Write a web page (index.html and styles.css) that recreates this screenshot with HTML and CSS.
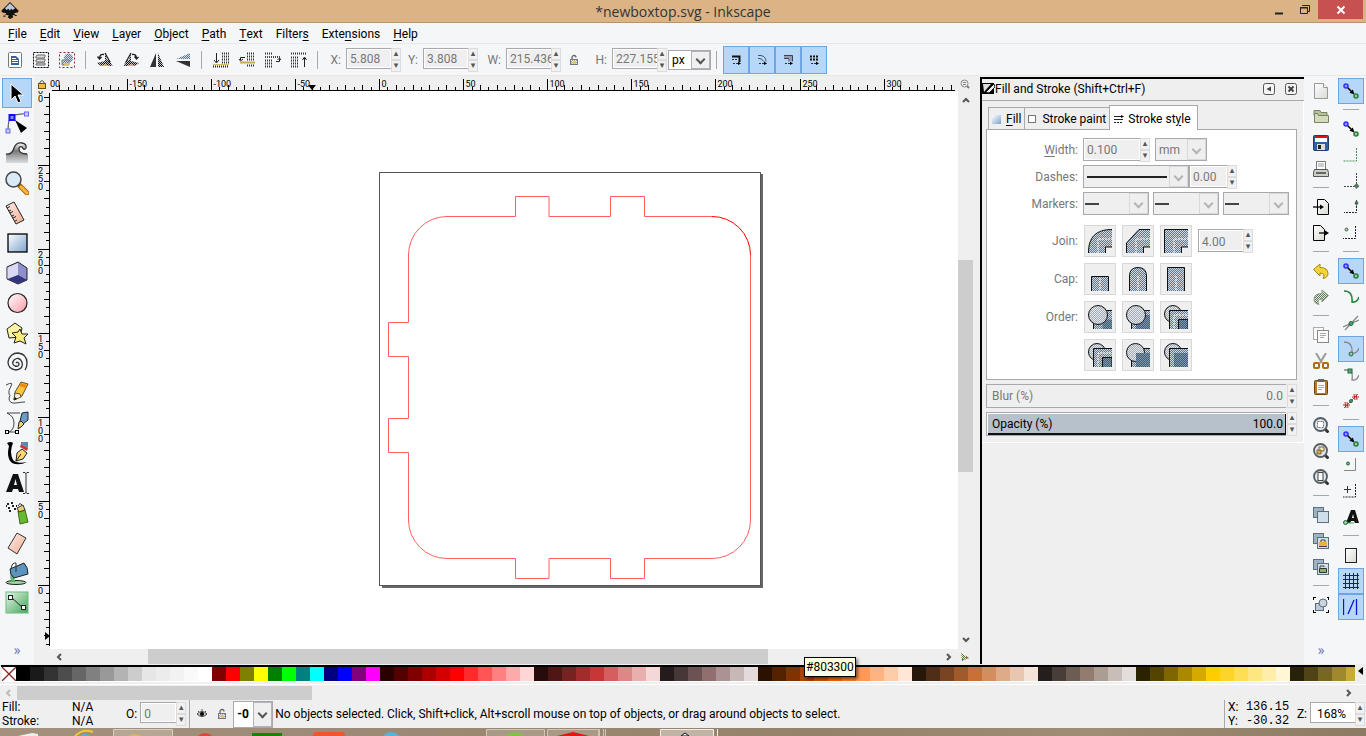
FILE: index.html
```html
<!DOCTYPE html>
<html lang="en">
<head>
    <meta charset="UTF-8">
    <meta name="viewport" content="width=device-width, initial-scale=1.0">
    <title>*newboxtop.svg - Inkscape</title>
    <link rel="stylesheet" href="styles.css">
</head>
<body>
    <!-- Shared patterns and symbols -->
    <svg class="defs" width="0" height="0" aria-hidden="true">
        <defs>
            <pattern id="chk" width="2" height="2" patternUnits="userSpaceOnUse"><rect width="2" height="2" fill="#d0d8e2"/><path d="M0 0h1v1H0zM1 1h1v1H1z" fill="#60788f"/></pattern>
            <pattern id="chk-dark" width="2" height="2" patternUnits="userSpaceOnUse"><rect width="2" height="2" fill="#8296ae"/><path d="M0 0h1v1H0zM1 1h1v1H1z" fill="#3c5a82"/></pattern>
            <pattern id="chk-light" width="2" height="2" patternUnits="userSpaceOnUse"><rect width="2" height="2" fill="#e6e8ea"/><path d="M0 0h1v1H0zM1 1h1v1H1z" fill="#a2acb8"/></pattern>
            <pattern id="chk-green" width="2" height="2" patternUnits="userSpaceOnUse"><rect width="2" height="2" fill="#eef2ec"/><path d="M0 0h1v1H0zM1 1h1v1H1z" fill="#3f7a24"/></pattern>
            <pattern id="chk-redo" width="2" height="2" patternUnits="userSpaceOnUse"><rect width="2" height="2" fill="#e4e8e2"/><path d="M0 0h1v1H0zM1 1h1v1H1z" fill="#5f7858"/></pattern>
            <pattern id="chk-black" width="2" height="2" patternUnits="userSpaceOnUse"><rect width="2" height="2" fill="#c4c4c4"/><path d="M0 0h1v1H0zM1 1h1v1H1z" fill="#111"/></pattern>
            <linearGradient id="blue" x2="1" y2="1"><stop stop-color="#fff"/><stop offset="1" stop-color="#7ba3cc"/></linearGradient>
            <linearGradient id="pink" x2="1" y2="1"><stop stop-color="#fff"/><stop offset="1" stop-color="#f99aa6"/></linearGradient>
            <linearGradient id="peach" x2="1" y2="1"><stop stop-color="#fdeee8"/><stop offset="1" stop-color="#efac92"/></linearGradient>
            <linearGradient id="green" x1="0" x2="1" y2="1"><stop stop-color="#e9f6ea"/><stop offset="1" stop-color="#3fa556"/></linearGradient>
            <linearGradient id="wave" x2="0" y2="1"><stop stop-color="#fff"/><stop offset=".4" stop-color="#777"/><stop offset="1" stop-color="#ddd"/></linearGradient>
            <linearGradient id="paper" x2="1" y2="1"><stop stop-color="#fff"/><stop offset="1" stop-color="#d8d8d4"/></linearGradient>
        </defs>
        <symbol id="snap" viewBox="0 0 16 16">
            <path d="M4 4l5 5" stroke="#000" stroke-width="1.5"/><path d="M11.500 11.500L6.500 9.800l3.300-3.300z"/>
            <circle cx="3" cy="3" r="2" fill="#99f" stroke="#33f" stroke-width="1.600"/><circle cx="13" cy="13" r="2" fill="#9c9" stroke="#2a8040" stroke-width="1.600"/>
        </symbol>
        <symbol id="lens" viewBox="0 0 16 16">
            <path d="M11 11l4.500 4.500" stroke="#333" stroke-width="3"/><circle cx="7.500" cy="7.500" r="6.500" fill="#dfe6ea" stroke="#555d62" stroke-width="1.800"/>
        </symbol>
        <symbol id="dup" viewBox="0 0 16 16">
            <rect x=".5" y=".5" width="10" height="10" fill="#9fb2c1" stroke="#5d6f7d"/><rect x="4.500" y="4.500" width="11" height="11" fill="#cfdeea" stroke="#5d6f7d"/>
        </symbol>
        <symbol id="padlock" viewBox="0 0 12 12">
            <path d="M4 6V3.500a2 2 0 0 1 4 0" fill="none" stroke="#666" stroke-width="1.300"/><rect x="2.500" y="5.500" width="7" height="5" fill="url(#chk-light)" stroke="#777"/><path d="M5 7h3v3H5z" fill="#e3cc55"/>
        </symbol>
        <symbol id="chev-l" viewBox="0 0 8 8"><path d="M6 1L3 4l3 3" fill="none" stroke="currentColor" stroke-width="2"/></symbol>
        <symbol id="chev-r" viewBox="0 0 8 8"><path d="M2 1l3 3-3 3" fill="none" stroke="currentColor" stroke-width="2"/></symbol>
        <symbol id="chev-u" viewBox="0 0 8 8"><path d="M1 6l3-3 3 3" fill="none" stroke="currentColor" stroke-width="2"/></symbol>
        <symbol id="chev-d" viewBox="0 0 8 8"><path d="M1 2l3 3 3-3" fill="none" stroke="currentColor" stroke-width="2"/></symbol>
        <symbol id="ink" viewBox="0 0 16 16">
            <path d="M8 0l7.500 7.500q.5 1.500-2 2l-2 .5 1.500 1-3 1 1 1.500L8 15l-2-1.500L7 12 3.500 11 5 10 2.500 9.500q-2.500-.5-2-2z" fill="#111"/><path d="M8 1l4.500 4.500-2 1.500L9 6 8 7.500 6.500 6 5 7 3.500 5.500z" fill="#b9c7dd"/><path d="M2 12.500h2M12 12h2" stroke="#222"/>
        </symbol>
    </svg>

    <div class="app">
        <header class="titlebar">
            <svg class="app-icon" width="18" height="18"><use href="#ink"/></svg>
            <h1>*newboxtop.svg - Inkscape</h1>
            <div class="window-buttons">
                <button aria-label="Minimize"><svg width="12" height="12"><path d="M2 9.500h8" stroke="#222" stroke-width="2"/></svg></button>
                <button aria-label="Restore"><svg width="12" height="12"><path d="M1.500 3.500h7v6h-7zM1 4h8M3.500 2V1.500h7v6H9" fill="none" stroke="#222"/></svg></button>
                <button class="close" aria-label="Close"><svg width="12" height="12"><path d="M2.500 2.500l7 7M9.500 2.500l-7 7" stroke="#fff" stroke-width="2"/></svg></button>
            </div>
        </header>

        <nav class="menubar">
            <button><u>F</u>ile</button>
            <button><u>E</u>dit</button>
            <button><u>V</u>iew</button>
            <button><u>L</u>ayer</button>
            <button><u>O</u>bject</button>
            <button><u>P</u>ath</button>
            <button><u>T</u>ext</button>
            <button>Filter<u>s</u></button>
            <button>Exte<u>n</u>sions</button>
            <button><u>H</u>elp</button>
        </nav>

        <!-- Selector tool controls -->
        <div class="toolbar">
            <button class="tb" aria-label="Select all"><svg width="16" height="16"><rect x="1.500" y=".5" width="13" height="15" rx="1" fill="#fdfdfd" stroke="#777"/><path d="M4 4h5l3 3v6H4z" fill="#2a66ad"/><path d="M5 6.500h4M5 8.500h6M5 10.500h6" stroke="#fff"/></svg></button>
            <button class="tb" aria-label="Select all in layers"><svg width="16" height="16"><rect x=".5" y=".5" width="15" height="15" fill="none" stroke="#000" stroke-dasharray="2 1"/><path d="M3 4l2-1h7v2l-1 1H3zM3 8l2-1h7v2l-1 1H3zM3 12l2-1h7v2H3z" fill="#ddd" stroke="#666"/></svg></button>
            <button class="tb" aria-label="Deselect"><svg width="16" height="16"><rect x=".5" y=".5" width="15" height="15" fill="none" stroke="#922" stroke-dasharray="2 2"/><circle cx="9.500" cy="6" r="4.500" fill="url(#chk)"/><path d="M3 8h7v5H3z" fill="url(#chk)" stroke="#888"/><path d="M5 11h5v2H5z" fill="#e0c060"/></svg></button>
            <span class="vsep"></span>
            <button class="tb" aria-label="Rotate left"><svg width="16" height="16"><path d="M8 1v10l7 2-2-4-3-1z" fill="url(#chk-black)"/><path d="M0 11l8-2 8 5H4z" fill="url(#chk-black)"/><path d="M4 14l4-2 5 2z" fill="#dcb860"/><path d="M7 2.500Q3 1.500 2.500 6M.5 4.500l2 2.500 2-2M8 1l5 9" fill="none" stroke="#222" stroke-width="1.300"/></svg></button>
            <button class="tb" aria-label="Rotate right"><svg width="16" height="16"><path d="M8 1v10l-7 2 2-4 3-1z" fill="url(#chk-black)"/><path d="M16 11L8 9l-8 5h12z" fill="url(#chk-black)"/><path d="M4 14l4-2 5 2z" fill="#dcb860"/><path d="M9 2.500Q13 1.500 13.500 6M11.500 4.500l2 2.500 2-2M8 1l-5 9" fill="none" stroke="#222" stroke-width="1.300"/></svg></button>
            <button class="tb" aria-label="Flip horizontal"><svg width="16" height="16"><path d="M7 1v14H1z" fill="#333"/><path d="M9 1v14h6z" fill="url(#chk-black)"/></svg></button>
            <button class="tb" aria-label="Flip vertical"><svg width="16" height="16"><path d="M15 1v6H1z" fill="url(#chk)"/><path d="M15 15V9H1z" fill="#333"/></svg></button>
            <span class="vsep"></span>
            <button class="tb" aria-label="Lower to bottom"><svg width="16" height="16"><path d="M3.500 1v9M1 8l2.500 3L6 8" fill="none" stroke="#222"/><path d="M9 1.500h7M9 4.500h7M9 7.500h7M9 10.500h7" stroke="#333" stroke-width="2" stroke-dasharray="1 1"/><path d="M0 12.500h16" stroke="#d9b860"/><path d="M0 14.500h16" stroke="#222" stroke-width="2" stroke-dasharray="1 1"/></svg></button>
            <button class="tb" aria-label="Lower"><svg width="16" height="16"><path d="M6 5.500H1.500V8M0 7l1.500 2L4 7" fill="none" stroke="#222"/><path d="M8 1.500h8M8 4.500h8M8 7.500h8M8 13.500h8" stroke="#333" stroke-width="2" stroke-dasharray="1 1"/><path d="M1 10.500h15" stroke="#c9a850" stroke-width="2"/></svg></button>
            <button class="tb" aria-label="Raise"><svg width="16" height="16"><path d="M11 9.500h3.500V7M12.500 8l2-2 1.500 2" fill="none" stroke="#222"/><path d="M0 1.500h8M0 8.500h8M0 11.500h8M0 14.500h8" stroke="#333" stroke-width="2" stroke-dasharray="1 1"/><path d="M0 5h15" stroke="#444" stroke-width="2" stroke-dasharray="1 1"/></svg></button>
            <button class="tb" aria-label="Raise to top"><svg width="16" height="16"><path d="M13.500 15V6M11.500 8l2-3 2 3" fill="none" stroke="#222"/><path d="M0 1.500h16M0 5.500h8M0 8.500h8M0 11.500h8M0 14.500h8" stroke="#333" stroke-width="2" stroke-dasharray="1 1"/></svg></button>
            <span class="vsep"></span>

            <label for="pos-x" class="dim">X:</label>
            <span class="spin"><input id="pos-x" type="text" value="5.808" disabled><span class="arrows"></span></span>
            <label for="pos-y" class="dim">Y:</label>
            <span class="spin"><input id="pos-y" type="text" value="3.808" disabled><span class="arrows"></span></span>
            <label for="width" class="dim wider">W:</label>
            <span class="spin"><input id="width" type="text" value="215.436" disabled><span class="arrows"></span></span>
            <button class="tb" aria-label="Lock ratio"><svg width="12" height="12"><use href="#padlock"/></svg></button>
            <label for="height" class="dim wide">H:</label>
            <span class="spin"><input id="height" type="text" value="227.155" disabled><span class="arrows"></span></span>
            <span class="combo unit"><select aria-label="Unit"><option>px</option><option>mm</option></select></span>
            <span class="vsep"></span>
            <div class="toggles">
                <button aria-label="Scale stroke"><svg width="12" height="12"><path d="M2 2.500h7.500V8" fill="none" stroke="#111" stroke-width="2"/><path d="M2 5.500h5M3 9.500h5" stroke="#333" stroke-dasharray="2 1"/><path d="M8 7.500l3 2L8 11z"/></svg></button>
                <button aria-label="Scale corners"><svg width="12" height="12"><path d="M2 1.500h3q5 1 5 6M2 4.500h2q3 1 3.500 3" fill="none" stroke="#456"/><path d="M3 9.500h5" stroke="#333" stroke-dasharray="2 1"/><path d="M8 7.500l3 2L8 11z"/></svg></button>
                <button aria-label="Move gradients"><svg width="12" height="12"><path d="M2 1.500h8.500v6M2 4.500h5v3" fill="none" stroke="#345"/><path d="M2 3h7v4" fill="none" stroke="#99a" stroke-width="2"/><path d="M3 9.500h5" stroke="#333" stroke-dasharray="2 1"/><path d="M8 7.500l3 2L8 11z"/></svg></button>
                <button aria-label="Move patterns"><svg width="12" height="12"><path d="M2 2.500h9M2 5.500h9" stroke="#111" stroke-width="2" stroke-dasharray="2 1"/><path d="M3 9.500h5" stroke="#333" stroke-dasharray="2 1"/><path d="M8 7.500l3 2L8 11z"/></svg></button>
            </div>
        </div>

        <main class="workspace">
            <div class="toolbox">
                <button class="active" aria-label="Select"><svg width="24" height="24"><path d="M6 3v16l4-4 3 7 3-1.500-3-6.500h5.500z" stroke="#fff"/></svg></button>
                <button aria-label="Edit paths by nodes"><svg width="24" height="24"><path d="M3 19Q3 6 8 4.500T22 2.500" fill="none" stroke="#444"/><rect x="1" y="18" width="4" height="4" fill="#ccf" stroke="#66e"/><rect x="19.500" y="1" width="4" height="4" fill="#ccf" stroke="#66e"/><rect x="4.500" y="4" width="5" height="5" fill="#88f" stroke="#11e" stroke-width="2"/><path d="M10 9l12 8-6 5z"/></svg></button>
                <button aria-label="Tweak"><svg width="24" height="24"><path d="M1 13q6 1 8-6 2-6 8-5 4 1 4 5-2 3-4-1-3-1-3 2 0 5 9 5v9H1z" fill="url(#wave)"/><path d="M1 13q6 1 8-6 2-6 8-5 5 1 4 5-2 3-4-1-3-1-3 2 0 5 8 5" fill="none" stroke="#333" stroke-width="1.300"/></svg></button>
                <button aria-label="Zoom"><svg width="24" height="24"><path d="M15 15l7 7" stroke="#a86400" stroke-width="5" stroke-linecap="round"/><path d="M16 16l6 6" stroke="#ffb93c" stroke-width="3" stroke-linecap="round"/><circle cx="8.500" cy="8.500" r="7.500" fill="#d9ebf7" stroke="#444" stroke-width="1.500"/></svg></button>
                <button aria-label="Measure"><svg width="24" height="24"><path d="M1 5l8-4 10 18-8 4z" fill="url(#peach)" stroke="#222"/><path d="M2 7l3-1.500M4 10l2-1M5 12l3-1.500M7 15l2-1M8 17l3-1.500M10 20l2-1" stroke="#222"/></svg></button>
                <button aria-label="Rectangle"><svg width="24" height="24"><rect x="3" y="3" width="19" height="18" fill="url(#blue)" stroke="#000" stroke-width="1.300"/></svg></button>
                <button aria-label="3D box"><svg width="24" height="24"><path d="M2 6l11-5 9 6v12l-9 4-11-5z" fill="#8f8fcc" stroke="#222"/><path d="M2.500 6.500L13 2l0 12-10.500 4z" fill="#d9d9f6"/><path d="M13 14l9 5-9 3.500-10-4.500z" fill="#34347e"/></svg></button>
                <button aria-label="Ellipse"><svg width="24" height="24"><circle cx="12.500" cy="12" r="9.500" fill="url(#pink)" stroke="#222" stroke-width="1.200"/></svg></button>
                <button aria-label="Star"><svg width="24" height="24"><path d="M2 8l8-6 7 5-2 9-11 1z" fill="#fdf3a4" stroke="#222"/><path d="M15 8l2 5h6l-4 4 2 6-6-3-6 2 2-6-4-4 6-1z" fill="#fdec78" stroke="#222"/></svg></button>
                <button aria-label="Spiral"><svg width="24" height="24"><path d="M11 12q2-2 3 1 0 3-4 2-4-2-1-6 5-4 8 2 2 7-6 8-8-1-8-8Q5 2 13 2q9 1 9 10 0 4-2 7" fill="none" stroke="#333" stroke-width="1.300"/></svg></button>
                <button aria-label="Pencil"><svg width="24" height="24"><path d="M1 4q8-4 5 1t-2 8q2 1 0 4 0 6 7 5 6-1 9-1" fill="none" stroke="#444"/><path d="M9 19l1-8 6-10 7 2-6 12z" fill="#fbc43a" stroke="#553"/><path d="M9 19l1-7 5 1 1 3z" fill="#fff4d8" stroke="#553"/><path d="M9 19l1-3 2 2z"/><path d="M16 2l6 2-1 3-7-2z" fill="#ee8a10"/></svg></button>
                <button aria-label="Bezier"><svg width="24" height="24"><path d="M2 2h13M2 2q7 3 7 10 0 7-5 9h8" fill="none" stroke="#444"/><path d="M17 2l6-1v8l-5 4-3-3z" fill="#6b9bc6" stroke="#223"/><path d="M13 18l1-7 2-1 3 3-3 3z" fill="#f0d070" stroke="#222"/><rect x=".5" y="19.500" width="3" height="3" fill="#fff" stroke="#000"/><rect x="10.500" y="19.500" width="3" height="3" fill="#fff" stroke="#000"/></svg></button>
                <button aria-label="Calligraphy"><svg width="24" height="24"><path d="M2 2q4-2 6 0-4 9 0 17 4 4 14 2-8 4-15 1Q1 17 4 5z"/><path d="M11 20l1-8 5-4 5 4-4 6z" fill="#fbd873" stroke="#222"/><path d="M11 20l5-7" stroke="#222"/><path d="M15 6l7 4 1-3-7-4z" fill="#c33"/><path d="M16 1h7v6l-7-4z" fill="#5c89b4"/></svg></button>
                <button aria-label="Text"><svg width="24" height="24"><path d="M1 21L8 3h5l6 18h-5l-1-3H8l-1 3zM9 14h3l-1.500-6z" fill="#111" fill-rule="evenodd"/><path d="M18 1.500h2l1 1 1-1h2M21 2v20M18 22.500h2l1-1 1 1h2" fill="none" stroke="#333"/></svg></button>
                <button aria-label="Spray"><svg width="24" height="24"><path d="M13 10l7-1 3 12-8 2z" fill="#69b832" stroke="#3a6a18"/><path d="M12 7l6-3 2 5-6 2z" fill="#e9ce6a" stroke="#333"/><path d="M13 5q2-4 4-1" fill="none" stroke="#333"/><path d="M2 3h2M6 2h2M3 7h2M7 5h2M9 8h2M4 10h2M1 5h1M11 5h1" stroke="#222" stroke-width="2"/></svg></button>
                <button aria-label="Eraser"><svg width="24" height="24"><path d="M3 17L12 2l9 5-9 16z" fill="url(#peach)" stroke="#333"/></svg></button>
                <button aria-label="Paint bucket"><svg width="24" height="24"><ellipse cx="11" cy="21.500" rx="10" ry="2" fill="#9ad8a0" stroke="#222"/><path d="M6 10q-2 7 1 11h4q-3-4-1-8z" fill="#5cb56c"/><path d="M5 8l14-6q4 4 4 11L9 17q-4-3-4-9z" fill="#5c93bf" stroke="#222"/><path d="M6 8q1-7 5-6v9" fill="none" stroke="#333"/></svg></button>
                <button aria-label="Gradient"><svg width="24" height="24"><rect x="1" y="1" width="22" height="21" fill="url(#green)" stroke="#6cba7c"/><path d="M6 6l12 11" stroke="#222"/><rect x="3.500" y="4.500" width="4" height="4" fill="#fff" stroke="#222"/><rect x="16.500" y="14.500" width="4" height="4" fill="#fff" stroke="#222"/></svg></button>
                <span class="more">»</span>
            </div>

            <section class="canvas-area">
                <div class="corner"><svg width="10" height="10"><path d="M3 5V3q2-3 4 0v2" fill="none" stroke="#555"/><rect x="1.500" y="4.500" width="7" height="5" fill="#f0bc3a" stroke="#6b5014"/></svg></div>
                <svg class="ruler" id="ruler-h"></svg>
                <div class="corner zoom-fit"><svg width="10" height="10"><path d="M6 6l3 3" stroke="#777" stroke-width="2"/><circle cx="4.500" cy="4.500" r="3.500" fill="#eee" stroke="#888"/><path d="M3 3.500h3M3 5.500h3" stroke="#888"/></svg></div>
                <svg class="ruler" id="ruler-v"></svg>
                <svg class="canvas">
                    <g transform="translate(329 81)">
                        <path d="M382 2h2v414H3v-2h379z" fill="#666"/>
                        <rect x=".5" y=".5" width="381" height="413" fill="#fff" stroke="#555"/>
                        <path class="cut" d="M333 44.500H265.500V24.500H231.500V44.500H170V24.500H136.500V44.500H68A38.500 38.500 0 0 0 29.500 83V150.500H9.500V184.500H29.500V246.500H9.500V280.500H29.500V348A38.500 38.500 0 0 0 68 386.500H136.500V406.500H170V386.500H231.500V406.500H265.500V386.500H333A38.500 38.500 0 0 0 371.500 348V83"/>
                        <path class="cut strong" d="M333 44.500A38.500 38.500 0 0 1 371.500 83"/>
                    </g>
                </svg>
                <div class="vscroll">
                    <svg width="8" height="8"><use href="#chev-u"/></svg>
                    <div class="track"><div class="thumb"></div></div>
                    <svg width="8" height="8"><use href="#chev-d"/></svg>
                </div>
                <div class="hscroll">
                    <svg width="8" height="8"><use href="#chev-l"/></svg>
                    <div class="track"><div class="thumb"></div></div>
                    <svg width="8" height="8"><use href="#chev-r"/></svg>
                </div>
                <div class="corner"><svg width="10" height="10"><path d="M1 1l8 5-7 3z" fill="url(#chk-green)"/><path d="M6 4l3 2-3 1z" fill="#b55"/><path d="M2 7h3L2 9z" fill="#66c"/></svg></div>
            </section>

            <aside class="dialog">
                <div class="dialog-head">
                    <svg width="13" height="13"><path d="M0 1h12v11H0z"/><path d="M1 2h8L2 10z" fill="#ddd"/><path d="M4 10l8-8 1 3-6 6z" fill="#eee" stroke="#222"/></svg>
                    <h2>Fill and Stroke (Shift+Ctrl+F)</h2>
                    <button aria-label="Iconify"><svg width="12" height="12"><rect x=".5" y=".5" width="11" height="11" rx="2" fill="#f4f4f4" stroke="#555"/><path d="M8 3.500v5L3.500 6z" fill="#444"/></svg></button>
                    <button aria-label="Close dialog"><svg width="12" height="12"><rect x=".5" y=".5" width="11" height="11" rx="2" fill="#f4f4f4" stroke="#555"/><path d="M3.500 3.500l5 5M8.500 3.500l-5 5" stroke="#444" stroke-width="2"/></svg></button>
                </div>
                <div class="dialog-body">
                    <div class="tabs">
                        <button><svg width="10" height="10"><rect width="9" height="9" y="1" fill="url(#blue)"/></svg><span><u>F</u>ill</span></button>
                        <button><svg width="10" height="10"><rect x=".5" y="1.500" width="7" height="7" fill="#fff" stroke="#777"/></svg><span>Stroke paint</span></button>
                        <button class="current"><svg width="10" height="10"><path d="M0 2.500h8M0 5.500h9" stroke="#222"/><path d="M0 8.500h9" stroke="#222" stroke-dasharray="2 1"/><path d="M7 1l3 1.500L7 4z"/></svg><span>Stroke st<u>y</u>le</span></button>
                    </div>
                    <div class="panel">
                        <div class="row">
                            <label for="sw"><u>W</u>idth:</label>
                            <span class="spin tall stroke-width"><input id="sw" type="text" value="0.100" disabled><span class="arrows"></span></span>
                            <span class="combo mm"><select aria-label="Width unit" disabled><option>mm</option></select></span>
                        </div>
                        <div class="row">
                            <label for="dashes">Dashes:</label>
                            <span class="combo dash"><select id="dashes" disabled><option label=" "></option></select></span>
                            <span class="spin tall short"><input type="text" aria-label="Dash offset" value="0.00" disabled><span class="arrows"></span></span>
                        </div>
                        <div class="row markers">
                            <label for="m-start">Markers:</label>
                            <span class="combo marker"><select id="m-start" disabled><option label=" "></option></select></span>
                            <span class="combo marker"><select aria-label="Mid marker" disabled><option label=" "></option></select></span>
                            <span class="combo marker"><select aria-label="End marker" disabled><option label=" "></option></select></span>
                        </div>
                        <div class="row big">
                            <span class="label">Join:</span>
                            <button disabled aria-label="Round join"><svg width="24" height="24"><path d="M0 24C0 8 8 .5 24 .5V18H18V24z" fill="url(#chk)"/><path d="M.5 24C.5 8 8 .5 24 .5M24 18H17.500V24" fill="none" stroke="#111"/><path d="M10 24V10H24" fill="none" stroke="#fff" stroke-dasharray="2 1"/></svg></button>
                            <button disabled aria-label="Bevel join"><svg width="24" height="24"><path d="M.5 24V14L13 .5H24V18H18V24z" fill="url(#chk)"/><path d="M.5 24V14L13 .5H24M24 18H17.500V24" fill="none" stroke="#111"/><path d="M10 24V10H24" fill="none" stroke="#fff" stroke-dasharray="2 1"/></svg></button>
                            <button disabled aria-label="Miter join"><svg width="24" height="24"><path d="M.5 24V.5H24V18H18V24z" fill="url(#chk)"/><path d="M.5 24V.5H24M24 18H17.500V24" fill="none" stroke="#111"/><path d="M10 24V10H24" fill="none" stroke="#fff" stroke-dasharray="2 1"/></svg></button>
                            <span class="spin tall"><input type="text" aria-label="Miter limit" value="4.00" disabled><span class="arrows"></span></span>
                        </div>
                        <div class="row big">
                            <span class="label">Cap:</span>
                            <button disabled aria-label="Butt cap"><svg width="24" height="24"><path d="M3.500 24V9.500h17V24" fill="url(#chk)" stroke="#111"/><path d="M12 11v13" stroke="#fff" stroke-dasharray="2 1"/></svg></button>
                            <button disabled aria-label="Round cap"><svg width="24" height="24"><path d="M3.500 24V9q0-8.500 8.500-8.500T20.500 9V24" fill="url(#chk)" stroke="#111"/><path d="M12 9v15" stroke="#fff" stroke-dasharray="2 1"/></svg></button>
                            <button disabled aria-label="Square cap"><svg width="24" height="24"><path d="M3.500 24V.5h17V24" fill="url(#chk)" stroke="#111"/><path d="M12 9v15" stroke="#fff" stroke-dasharray="2 1"/></svg></button>
                        </div>
                        <div class="row big">
                            <span class="label">Order:</span>
                            <button disabled aria-label="Fill, stroke, markers"><svg width="24" height="24"><path d="M5.500 24V5.500H24V24z" fill="url(#chk)"/><path d="M5.500 24V5.500H24" fill="none" stroke="#111"/><path d="M14.500 14.500H24V24h-9.500z" fill="url(#chk-dark)"/><circle cx="10" cy="10" r="9.500" fill="url(#chk-light)" stroke="#111"/></svg></button>
                            <button disabled aria-label="Stroke, fill, markers"><svg width="24" height="24"><path d="M5.500 24V5.500H24V24z" fill="url(#chk)"/><path d="M5.500 24V5.500H24" fill="none" stroke="#111"/><path d="M10 10H24V24H10z" fill="url(#chk-dark)"/><circle cx="10" cy="10" r="9.500" fill="url(#chk-light)" stroke="#111"/></svg></button>
                            <button disabled aria-label="Fill, markers, stroke"><svg width="24" height="24"><circle cx="9" cy="9" r="8.500" fill="url(#chk-light)" stroke="#111"/><path d="M5.500 24V5.500H24V24z" fill="url(#chk)"/><path d="M5.500 24V5.500H24" fill="none" stroke="#111"/><path d="M10 23V10H24" fill="none" stroke="#fff" stroke-dasharray="2 1"/><path d="M14.500 24V14.500H24V24" fill="url(#chk-dark)" stroke="#111"/></svg></button>
                        </div>
                        <div class="row big">
                            <span class="label"></span>
                            <button disabled aria-label="Markers, fill, stroke"><svg width="24" height="24"><circle cx="9" cy="9" r="8.500" fill="url(#chk-light)" stroke="#111"/><path d="M5.500 24V5.500H24V24z" fill="url(#chk)"/><path d="M5.500 24V5.500H24" fill="none" stroke="#111"/><path d="M10 23V10H24" fill="none" stroke="#fff" stroke-dasharray="2 1"/><path d="M14.500 24V14.500H24V24" fill="url(#chk-dark)" stroke="#111"/></svg></button>
                            <button disabled aria-label="Stroke, markers, fill"><svg width="24" height="24"><path d="M5.500 24V5.500H24V24z" fill="url(#chk)"/><path d="M5.500 24V5.500H24" fill="none" stroke="#111"/><circle cx="9.500" cy="9.500" r="9" fill="url(#chk-light)" stroke="#111"/><path d="M10 10H24V24H10z" fill="url(#chk-dark)"/></svg></button>
                            <button disabled aria-label="Markers, stroke, fill"><svg width="24" height="24"><circle cx="9" cy="9" r="8.500" fill="url(#chk-light)" stroke="#111"/><path d="M5.500 24V5.500H24V24z" fill="url(#chk)"/><path d="M5.500 24V5.500H24" fill="none" stroke="#111"/><path d="M10 10H24V24H10z" fill="url(#chk-dark)"/></svg></button>
                        </div>
                    </div>
                    <div class="meter">
                        <div class="bar"><label for="blur">Blur (%)</label><input id="blur" type="text" value="0.0" disabled></div>
                        <span class="arrows"></span>
                    </div>
                    <div class="meter on">
                        <div class="bar"><label for="opacity">Opacity (%)</label><input id="opacity" type="text" value="100.0"></div>
                        <span class="arrows"></span>
                    </div>
                </div>
            </aside>

            <div class="sidebar">
                <button aria-label="New"><svg width="16" height="16"><path d="M1.500.5h9l4 4v11h-13z" fill="url(#paper)" stroke="#999"/><path d="M10.500.5v4h4" fill="#fff" stroke="#999"/></svg></button>
                <button aria-label="Open"><svg width="16" height="16"><path d="M1 1.500h6l1 2h6v3H1z" fill="#b4c098" stroke="#79845f"/><path d="M1.500 4.500v9h14v-7h-10l-1-2z" fill="#d3dbbf" stroke="#79845f"/></svg></button>
                <button aria-label="Save"><svg width="16" height="16"><rect x=".5" y=".5" width="15" height="15" rx="1" fill="#2f62a4" stroke="#1b3d6d"/><path d="M2 1h12v6H2z" fill="#fff"/><path d="M2 1h12v2H2z" fill="#d11"/><path d="M4 9h8v6H4z" fill="#dcdcdc"/><path d="M5 10h3v4H5z" fill="#222"/></svg></button>
                <button aria-label="Print"><svg width="16" height="16"><path d="M3.500.5h9v8h-9z" fill="#fff" stroke="#777"/><path d="M5 3h6M5 5h6" stroke="#999"/><path d="M1.500 8.500h13l1 3v4H.5v-4z" fill="#ccd0c8" stroke="#555"/><path d="M3 12h10" stroke="#444" stroke-width="1.500"/></svg></button>
                <span class="hsep"></span>
                <button aria-label="Import"><svg width="16" height="16"><path d="M4.500.5h7l4 4v11h-11z" fill="url(#paper)" stroke="#000"/><path d="M0 8h8" stroke="#000" stroke-width="1.300"/><path d="M7 5.500L11 8l-4 2.500z"/></svg></button>
                <button aria-label="Export"><svg width="16" height="16"><path d="M.5.500h7l4 4v11H.5z" fill="url(#paper)" stroke="#000"/><path d="M6 8h7" stroke="#000" stroke-width="1.300"/><path d="M12 5.500L16 8l-4 2.500z"/></svg></button>
                <span class="hsep"></span>
                <button aria-label="Undo"><svg width="16" height="16"><path d="M.5 6.500L7 1v3.500q8 0 8 6 0 4-5 5 3-5-3-5.500V13z" fill="#f2d338" stroke="#a8860c"/></svg></button>
                <button aria-label="Redo"><svg width="16" height="16"><path d="M15.500 6.500L9 1v3.500q-8 0-8 6 0 4 5 5-3-5 3-5.500V13z" fill="url(#chk-redo)" stroke="#8a9a84"/></svg></button>
                <span class="hsep"></span>
                <button aria-label="Copy"><svg width="16" height="16"><rect x=".5" y=".5" width="10" height="12" fill="#fafafa" stroke="#aaa"/><rect x="4.500" y="3.500" width="11" height="12" fill="#fafafa" stroke="#888"/><path d="M7 6.500h6M7 8.500h6M7 10.500h4" stroke="#aaa"/></svg></button>
                <button aria-label="Cut"><svg width="16" height="16"><path d="M3 0l6 10M13 0L7 10" stroke="#999" stroke-width="2"/><rect x="1" y="10" width="5" height="5" rx="1" fill="none" stroke="#b36a10" stroke-width="2"/><rect x="10" y="10" width="5" height="5" rx="1" fill="none" stroke="#b36a10" stroke-width="2"/></svg></button>
                <button aria-label="Paste"><svg width="16" height="16"><rect x="1.500" y="1.500" width="13" height="14" rx="1" fill="#b5792a" stroke="#6d4510"/><path d="M4 3h8v11H4z" fill="#fff"/><path d="M5 0h6v3H5z" fill="#666"/><path d="M5 6.500h6M5 8.500h6M5 10.500h4" stroke="#aaa"/></svg></button>
                <span class="hsep"></span>
                <button aria-label="Zoom selection"><svg width="16" height="16"><use href="#lens"/><rect x="4.500" y="4.500" width="6" height="6" fill="#fff" stroke="#777" stroke-dasharray="2 1"/></svg></button>
                <button aria-label="Zoom drawing"><svg width="16" height="16"><use href="#lens"/><path d="M6 4h5v4H6z" fill="#f5e7a8" stroke="#764"/><path d="M4 7h4v4H4z" fill="#e0a530" stroke="#764"/></svg></button>
                <button aria-label="Zoom page"><svg width="16" height="16"><use href="#lens"/><rect x="5" y="3.500" width="5" height="8" fill="#fff" stroke="#444"/></svg></button>
                <span class="hsep"></span>
                <button aria-label="Duplicate"><svg width="16" height="16"><use href="#dup"/></svg></button>
                <button aria-label="Clone"><svg width="16" height="16"><use href="#dup"/><path d="M8 9V7h4v2" fill="none" stroke="#444"/><path d="M6 9h8v5H6z" fill="#e8b440"/><path d="M6 13.500h8" stroke="#444"/></svg></button>
                <button aria-label="Unlink clone"><svg width="16" height="16"><use href="#dup"/><path d="M7 9V7h4v1" fill="none" stroke="#444"/><path d="M6.500 9.500h7v4h-7z" fill="#8ab06a" stroke="#333"/></svg></button>
                <span class="hsep"></span>
                <button aria-label="Group"><svg width="16" height="16"><rect x="2.500" y="6.500" width="8" height="7" fill="#b9cbd8" stroke="#667"/><circle cx="10" cy="6" r="4" fill="#c7d7e2" stroke="#667"/><path d="M0 0h3v1H1v2H0zM16 0h-2v1h1v2h1zM0 16h3v-1H1v-2H0zM16 16h-3v-1h2v-2h1z"/></svg></button>
                <span class="more">»</span>
            </div>

            <div class="sidebar snapbar">
                <button class="active" aria-label="Enable snapping"><svg width="16" height="16"><use href="#snap"/></svg></button>
                <span class="hsep"></span>
                <button aria-label="Snap bounding boxes"><svg width="16" height="16"><use href="#snap"/></svg></button>
                <button aria-label="Snap to edges"><svg width="16" height="16"><path d="M13.500 1v13H0" fill="none" stroke="#4b8a58" stroke-dasharray="2 1"/></svg></button>
                <button aria-label="Snap to corners"><svg width="16" height="16"><path d="M13.500 0v13.500H0" fill="none" stroke="#444" stroke-dasharray="2 1"/><path d="M13.500 10l3 3-3 3-3-3z" fill="#5b7a62"/></svg></button>
                <button aria-label="Snap edge midpoints"><svg width="16" height="16"><path d="M13.500 1v12.500H1" fill="none" stroke="#222" stroke-dasharray="2 1"/><path d="M13.500 1l2 3-2 3-2-3z" fill="#476b50"/></svg></button>
                <button aria-label="Snap centers"><svg width="16" height="16"><path d="M12.500 1v12.500H0" fill="none" stroke="#222" stroke-dasharray="2 1"/><circle cx="3.500" cy="4.500" r="1.500" fill="#9c9" stroke="#476b50"/></svg></button>
                <span class="hsep"></span>
                <button class="active" aria-label="Snap nodes"><svg width="16" height="16"><use href="#snap"/></svg></button>
                <button aria-label="Snap to paths"><svg width="16" height="16"><path d="M1 2q9 0 8 11 5 1 7-5" fill="none" stroke="#27863a" stroke-width="1.600"/></svg></button>
                <button aria-label="Snap intersections"><svg width="16" height="16"><path d="M0 12L16 5M2 15L15 1" stroke="#888" stroke-width="1.300"/><circle cx="8" cy="8.500" r="2" fill="#4a5" stroke="#264"/></svg></button>
                <button class="active" aria-label="Snap cusp nodes"><svg width="16" height="16"><path d="M1 1q9 0 8 11 5 1 7-5" fill="none" stroke="#888" stroke-width="1.300"/><circle cx="8" cy="13" r="2" fill="#9c9" stroke="#264"/></svg></button>
                <button aria-label="Snap smooth nodes"><svg width="16" height="16"><path d="M1 3h6q3 2 2 10 5 1 7-5" fill="none" stroke="#888" stroke-width="1.300"/><rect x="5" y="2" width="4" height="4" fill="#5a6" stroke="#264"/></svg></button>
                <button aria-label="Snap midpoints"><svg width="16" height="16"><path d="M1 15L15 1" stroke="#777"/><path d="M2 9l1 6M4 9l1 6M0 12h7M11 1l1 6M13 1l1 6M9 4h7" stroke="#c22"/><circle cx="8" cy="8" r="1.500" fill="#4a5" stroke="#264"/></svg></button>
                <span class="hsep"></span>
                <button class="active" aria-label="Snap others"><svg width="16" height="16"><use href="#snap"/></svg></button>
                <button aria-label="Snap object centers"><svg width="16" height="16"><path d="M12.500 1v12.500H1" fill="none" stroke="#888"/><circle cx="5" cy="6.500" r="1.500" fill="#6b7" stroke="#264"/></svg></button>
                <button aria-label="Snap rotation centers"><svg width="16" height="16"><path d="M12.500 1v13H0" fill="none" stroke="#222" stroke-dasharray="2 1"/><path d="M1 6.500h7M4.500 3v7" stroke="#333"/></svg></button>
                <button aria-label="Snap text baselines"><svg width="16" height="16"><path d="M3 14L8 1h4l4 13h-4l-1-2H8l-1 2zM9 9h2l-1-4z" fill="#111" fill-rule="evenodd"/><path d="M2 14h9" stroke="#4a5"/><circle cx="2.500" cy="13.500" r="2" fill="#9c9" stroke="#264"/></svg></button>
                <span class="hsep"></span>
                <button aria-label="Snap page border"><svg width="16" height="16"><rect x="2.500" y="1.500" width="11" height="14" fill="url(#paper)" stroke="#222"/></svg></button>
                <button class="active" aria-label="Snap grids"><svg width="16" height="16"><path d="M2.500 0v16M6.500 0v16M10.500 0v16M14.500 0v16M0 2.500h16M0 6.500h16M0 10.500h16M0 14.500h16" stroke="#11d"/></svg></button>
                <button class="active" aria-label="Snap guides"><svg width="16" height="16"><path d="M.5 0v16M13.500 0v16M5 15L11 1" stroke="#11d" stroke-width="1.300"/></svg></button>
            </div>
        </main>

        <div class="palette">
            <div class="swatches" id="swatches"><svg width="14" height="14"><rect width="14" height="14" fill="#fff"/><path d="M0 0l14 14M14 0L0 14" stroke="#822" stroke-width="1.300"/></svg></div>
            <svg class="palette-menu" width="6" height="8"><path d="M5 0v8L0 4z"/></svg>
            <div class="tooltip" role="tooltip">#803300</div>
        </div>
        <div class="palette-scroll">
            <svg class="off" width="8" height="8"><use href="#chev-l"/></svg>
            <div class="track"><div class="thumb"></div></div>
            <svg width="8" height="8"><use href="#chev-r"/></svg>
        </div>

        <footer class="statusbar">
            <dl class="style-info">
                <dt>Fill:</dt><dd>N/A</dd>
                <dt>Stroke:</dt><dd>N/A</dd>
            </dl>
            <label for="obj-opacity">O:</label>
            <span class="spin small"><input id="obj-opacity" type="text" value="0" disabled><span class="arrows"></span></span>
            <span class="line"></span>
            <button aria-label="Layer visible"><svg width="12" height="12"><path d="M1 6q5-5 10 0-5 5-10 0z" fill="#ccc" stroke="#444"/><circle cx="6" cy="6" r="2"/><path d="M2 3l1 1M6 1v2M10 3L9 4" stroke="#555"/></svg></button>
            <button aria-label="Layer unlocked"><svg width="12" height="12"><use href="#padlock"/></svg></button>
            <span class="combo layer"><select aria-label="Current layer"><option>-0</option></select></span>
            <p>No objects selected. Click, Shift+click, Alt+scroll mouse on top of objects, or drag around objects to select.</p>
            <dl class="coords">
                <dt>X:</dt><dd>136.15</dd>
                <dt>Y:</dt><dd>-30.32</dd>
            </dl>
            <label for="zoom">Z:</label>
            <span class="spin zoom"><input id="zoom" type="text" value="168%"><span class="arrows"></span></span>
        </footer>

        <svg class="taskbar">
            <path d="M18 8l14-3 6 1v2z" fill="#eee"/>
            <path d="M75 8q8-8 18-4" fill="none" stroke="#f4c92a" stroke-width="2"/><path d="M80 8q5-4 10 0z" fill="#4ab4e6"/>
            <path d="M113.500 9V1.500h59V9" fill="#b5a793" stroke="#d8cfc2"/><path d="M128 8l6-2 8 2z" fill="#d8b95c"/>
            <circle cx="205" cy="15" r="10" fill="#d9493a"/>
            <path d="M252 5h30v3h-30z" fill="#0a8a0a"/>
            <path d="M313 8q0-4 4-4h24q4 0 4 4z" fill="#f1562a"/>
            <circle cx="391" cy="14" r="10" fill="#54b4dd"/>
            <path d="M486.500 9V1.500h58V9M547.500 9V1.500h51V9M599.500 1v8M603.500 1v8M605.500 1v8" fill="#a99a86" stroke="#d0c6b8"/>
            <circle cx="515" cy="16" r="12" fill="#82c04a"/><path d="M557 8l16-4 16 4z" fill="#e11"/>
            <path d="M660.500 9V1.500h53V9M717.500 1v8" fill="#bfb4a5" stroke="#f3eee6"/><path d="M681 8l4-3 4 3z" fill="#eee" stroke="#111"/>
        </svg>
    </div>

    <script src="script.js"></script>
</body>
</html>
```

FILE: styles.css
```css
* {
    box-sizing: border-box;
}

body {
    margin: 0;
    font-family: Roboto, 'Open Sans', sans-serif;
    font-size: 12px;
    line-height: 14px;
    color: #000;
}

button, input, select {
    font: inherit;
    color: inherit;
}

button {
    background: none;
    border: none;
    padding: 0;
    display: flex;
    align-items: center;
    justify-content: center;
}

h1, h2, p, dl, dd {
    margin: 0;
    font-weight: normal;
}

.defs {
    position: absolute;
}

.app {
    height: 100vh;
    display: flex;
    flex-direction: column;
    background: #efefef;
    overflow: hidden;
}

.app svg {
    flex: none;
}

/* Title bar */
.titlebar {
    height: 23px;
    flex: none;
    display: grid;
    grid-template-columns: 1fr auto 1fr;
    background: #dbb384;
    border-bottom: 1px solid #b8956c;
}

.titlebar h1 {
    font-family: 'Open Sans', sans-serif;
    font-size: 14px;
    line-height: 23px;
    color: #333;
}

.app-icon {
    margin: 2px 0 0 1px;
}

.window-buttons {
    display: flex;
    justify-content: flex-end;
    padding-right: 3px;
}

.window-buttons button {
    width: 26px;
    height: 19px;
}

.window-buttons .close {
    width: 45px;
    background: #c75050;
}

/* Menu and tool controls */
.menubar {
    height: 21px;
    flex: none;
    display: flex;
    gap: 13px;
    padding: 2px 0 0 8px;
    background: #f5f6f8;
    border-bottom: 1px solid #e6e8ea;
}

u {
    text-underline-offset: 2px;
}

.toolbar {
    height: 32px;
    flex: none;
    display: flex;
    align-items: center;
    padding-left: 2px;
    background: #f5f6f8;
    border-bottom: 1px solid #e6e8ea;
}

.tb {
    width: 26px;
    height: 26px;
}

.vsep {
    width: 12px;
    height: 18px;
    background: linear-gradient(#a8a8a8, #a8a8a8) 5px 0 / 1px 100% no-repeat;
}

.toolbar label {
    width: 22px;
    padding-right: 5px;
    text-align: right;
    white-space: nowrap;
}

.dim {
    color: #777;
}

.toolbar .wide {
    width: 25px;
}

.toolbar .wider {
    width: 28px;
}

.spin {
    display: flex;
}

.spin input {
    width: 45px;
    height: 21px;
    padding: 2px 0 0 3px;
    border: 1px solid #a7a9ae;
    border-right: none;
    border-radius: 0;
    background: #fff;
    min-width: 0;
}

.spin input:disabled {
    color: #777;
    background: #efefef;
    box-shadow: inset 0 0 0 1px #fff;
}

/* Up and down buttons of a number box */
.arrows {
    width: 10px;
    align-self: stretch;
    display: flex;
    flex-direction: column;
    justify-content: space-between;
}

.arrows::before, .arrows::after {
    content: '▴';
    height: 10px;
    border: 1px solid #dcdcdc;
    background: #f1f1f1;
    color: #555;
    font: 9px/8px 'DejaVu Sans', sans-serif;
    text-align: center;
}

.arrows::after {
    content: '▾';
}

/* Drop-downs */
.combo {
    position: relative;
    height: 20px;
    display: flex;
}

.combo select {
    appearance: none;
    width: 100%;
    height: 100%;
    padding: 0 3px;
    border: 1px solid #a7a9ae;
    border-radius: 0;
    background: #fff;
    opacity: 1;
}

.combo::before {
    content: '';
    position: absolute;
    right: 1px;
    top: 1px;
    bottom: 1px;
    width: 17px;
    background: #efefef;
    border: 1px solid #b4b4b8;
    pointer-events: none;
}

.combo::after {
    content: '';
    position: absolute;
    right: 7px;
    top: calc(50% - 4px);
    width: 5px;
    height: 5px;
    border: solid #555;
    border-width: 0 2px 2px 0;
    transform: rotate(45deg);
    pointer-events: none;
}

.combo:has(:disabled)::after {
    border-color: #b4b4b4;
}

.combo:has(:disabled)::before {
    border-color: #d8d8d8;
}

.combo select:disabled {
    background-color: #efefef;
    color: #777;
}

.unit {
    width: 43px;
    margin-left: 1px;
}

.toggles {
    display: flex;
}

.toggles button {
    width: 26px;
    height: 28px;
    background: #b7d7f8;
    border: 1px solid #6ca6e2;
}

/* Workspace */
.workspace {
    flex: 1;
    min-height: 0;
    display: flex;
}

.toolbox {
    width: 34px;
    flex: none;
    display: flex;
    flex-direction: column;
    padding: 2px 2px 7px;
    background: #f5f6f8;
    overflow: hidden;
}

.toolbox button {
    width: 30px;
    height: 30px;
    flex: none;
}

.active {
    background: #b7d7f8;
    border: 1px solid #6ca6e2;
}

.more {
    margin-top: auto;
    text-align: center;
    font-size: 15px;
    color: #7878b8;
}

.canvas-area {
    flex: 1;
    min-width: 0;
    display: grid;
    grid-template-columns: 16px 1fr 22px;
    grid-template-rows: 15px 1fr 15px;
}

.corner {
    display: flex;
    align-items: center;
    justify-content: center;
}

.zoom-fit, .hscroll + .corner {
    padding-right: 8px;
}

.ruler {
    width: 100%;
    height: 100%;
    font-size: 9px;
}

.canvas {
    width: 100%;
    height: 100%;
    background: #fff;
    overflow: hidden;
}

.cut {
    fill: none;
    stroke: #ff5f5f;
}

.strong {
    stroke: #f00;
}

.vscroll, .hscroll, .palette-scroll {
    display: flex;
    align-items: center;
    color: #555;
}

.vscroll {
    flex-direction: column;
    padding: 5px 7px 5px 0;
}

.hscroll {
    grid-column: 1 / 3;
    padding: 0 5px 0 21px;
}

.track {
    flex: 1;
    min-width: 0;
    display: flex;
}

.thumb {
    background: #cdcdcd;
}

.vscroll .track {
    flex-direction: column;
    width: 15px;
    padding-top: 156px;
}

.vscroll .thumb {
    height: 212px;
}

.hscroll .track {
    height: 15px;
    padding-left: 85px;
}

.hscroll .thumb {
    width: 620px;
}

/* Fill and Stroke dialog */
.dialog {
    width: 324px;
    flex: none;
    margin-top: 1px;
    border-top: 2px solid #000;
    border-left: 2px solid #000;
    background: #efefef;
    overflow: hidden;
}

.dialog-head {
    height: 22px;
    display: flex;
    align-items: center;
    padding: 0 7px 2px 0;
    border-bottom: 1px solid #aaa;
}

.dialog-head h2 {
    flex: 1;
    font-size: 12px;
}

.dialog-head button {
    margin-left: 10px;
}

.dialog-body {
    padding: 0 6px 6px 4px;
    border-right: 1px solid #fff;
    border-bottom: 1px solid #fff;
}

.tabs {
    display: flex;
    align-items: flex-end;
    height: 28px;
    padding-left: 2px;
}

.tabs button {
    height: 22px;
    gap: 4px;
    padding: 1px 3px 0;
    border: 1px solid #a7a9ae;
    border-bottom: none;
    border-right: none;
    white-space: nowrap;
}

.tabs .current {
    height: 25px;
    padding: 1px 6px 0 4px;
    margin-bottom: -1px;
    background: #fff;
    border-right: 1px solid #a7a9ae;
    z-index: 1;
}

.panel {
    height: 251px;
    margin-bottom: 4px;
    padding-top: 6px;
    background: #fff;
    border: 1px solid #a7a9ae;
}

.row {
    height: 27px;
    display: flex;
    align-items: center;
    color: #777;
}

.row label, .row .label {
    width: 91px;
    margin-right: 5px;
    text-align: right;
}

.tall input, .row .combo {
    height: 23px;
}

.stroke-width input {
    width: 57px;
}

.short input {
    width: 38px;
}

.mm {
    width: 52px;
    margin-left: 5px;
}

.dash {
    width: 106px;
}

.dash select:disabled {
    background: linear-gradient(#222, #222) 3px 10px / 80px 2px no-repeat #efefef;
}

.markers {
    gap: 4px;
}

.markers label {
    margin-right: 1px;
}

.marker {
    width: 66px;
}

.marker select:disabled {
    background: linear-gradient(#444, #444) 1px 10px / 14px 2px no-repeat #efefef;
}

.big {
    height: 38px;
    gap: 6px;
}

.markers + .big {
    margin-top: 5px;
}

.big .label {
    margin-right: 0;
}

.big button {
    width: 32px;
    height: 32px;
    background: #efefef;
    border: 1px solid #d8d8d8;
}

.meter {
    height: 24px;
    display: flex;
    gap: 1px;
}

.meter + .meter {
    margin-top: 4px;
}

.bar {
    flex: 1;
    min-width: 0;
    display: flex;
    align-items: center;
    justify-content: space-between;
    padding: 0 3px 0 5px;
    border: 1px solid #a7a9ae;
    border-right: none;
    color: #777;
}

.bar input {
    width: 50px;
    padding: 0;
    border: none;
    background: none;
    text-align: right;
}

.bar input:disabled {
    color: #777;
}

.on .bar {
    color: #000;
    background: #b6c1cb;
    box-shadow: inset 1px 1px #fff, inset -1px -2px #111;
}

/* Command and snap bars */
.sidebar {
    width: 32px;
    flex: none;
    display: flex;
    flex-direction: column;
    align-items: center;
    padding: 2px 0 7px 2px;
    background: #f5f6f8;
    overflow: hidden;
}

.snapbar {
    width: 30px;
    padding-left: 0;
}

.sidebar button {
    width: 26px;
    height: 26px;
    flex: none;
}

.hsep {
    width: 16px;
    height: 12px;
    flex: none;
    background: linear-gradient(#a8a8a8, #a8a8a8) 0 5px / 100% 1px no-repeat;
}

/* Palette */
.palette {
    position: relative;
    height: 20px;
    flex: none;
    display: flex;
    margin-top: 1px;
    padding-left: 1px;
    border-bottom: 1px solid #fff;
}

.swatches {
    flex: 1;
    min-width: 0;
    display: flex;
    height: 17px;
    padding-left: 1px;
    border-top: 2px solid #000;
    border-bottom: 1px solid #fff;
    overflow: hidden;
}

.swatches span {
    width: 14px;
    flex: none;
}

.palette-menu {
    margin: 2px 2px 0 3px;
}

.tooltip {
    position: absolute;
    left: 804px;
    top: -8px;
    padding: 2px 1px;
    border: 1px solid #000;
    background: #ffffe1;
    box-shadow: 2px 2px 3px rgba(0, 0, 0, 0.5);
    z-index: 1;
}

.palette-scroll {
    height: 15px;
    flex: none;
    padding: 0 13px 0 4px;
}

.palette-scroll .off {
    color: #bbb;
}

.palette-scroll .track {
    height: 14px;
    padding-left: 5px;
}

.palette-scroll .thumb {
    width: 295px;
}

/* Status bar */
.statusbar {
    height: 28px;
    flex: none;
    display: flex;
    align-items: center;
    padding-left: 2px;
}

.style-info, .coords {
    display: grid;
    grid-template-columns: 70px 54px;
    line-height: 14px;
}

.statusbar label {
    margin-right: 3px;
}

.small input {
    width: 36px;
}

.line {
    width: 1px;
    height: 28px;
    margin: 0 3px;
    background: #a8a8a8;
}

.statusbar button {
    width: 18px;
    margin-right: 2px;
}

.statusbar .layer {
    width: 40px;
    height: 27px;
    margin-right: 2px;
    font-weight: bold;
}

.statusbar p {
    flex: 1;
    min-width: 0;
    white-space: nowrap;
}

.coords {
    grid-template-columns: 18px 51px;
    padding-left: 3px;
    border-left: 1px solid #a8a8a8;
}

.coords dd {
    font-family: 'Liberation Mono', monospace;
    font-size: 12px;
}

.zoom {
    padding-right: 1px;
}

.zoom input {
    padding-left: 6px;
}

.taskbar {
    width: 100%;
    height: 8px;
    background: linear-gradient(90deg, #a3917c, #95826b 60%, #a08d76 80%, #8d7a62);
}
```

FILE: script.js
```js
const SVG_NS = 'http://www.w3.org/2000/svg';
const STEP = 8.41; // pixels for 5 units

const colors = (
    '000000 1a1a1a 333333 4d4d4d 666666 808080 999999 b3b3b3 cccccc e6e6e6 ececec f2f2f2 f9f9f9 ffffff ' +
    '800000 ff0000 808000 ffff00 008000 00ff00 008080 00ffff 000080 0000ff 800080 ff00ff ' +
    '2b0000 550000 800000 aa0000 d40000 ff0000 ff2a2a ff5555 ff8080 ffaaaa ffd5d5 ' +
    '280b0b 501616 782121 a02c2c c83737 d35f5f de8787 e9afaf f4d7d7 ' +
    '241c1c 483737 6c5353 916f6f ac9393 c8b7b7 e3dbdb ' +
    '2b1100 552200 803300 aa4400 d45500 ff6600 ff7f2a ff9955 ffb380 ffccaa ffe6d5 ' +
    '28170b 502d16 784421 a05a2c c87137 d38d5f deaa87 e9c6af f4e3d7 ' +
    '241f1c 483e37 6c5d53 917c6f ac9d93 c8beb7 e3dedb ' +
    '2b2200 554400 806600 aa8800 d4aa00 ffcc00 ffd42a ffdd55 ffe680 ffeeaa fff6d5 ' +
    '28220b 504416 786721 a0892c c8ab37'
).split(' ');

const swatches = document.getElementById('swatches');
colors.forEach(color => {
    const cell = document.createElement('span');
    cell.style.background = '#' + color;
    swatches.appendChild(cell);
});

function add(parent, name, attrs, text) {
    const el = document.createElementNS(SVG_NS, name);
    for (const key in attrs) {
        el.setAttribute(key, attrs[key]);
    }
    if (text !== undefined) {
        el.textContent = text;
    }
    parent.appendChild(el);
}

function tickLength(i, full) {
    if (i % 10 === 0) return full;
    return i % 2 === 0 ? 5 : 3;
}

// Horizontal ruler, zero sits at the left edge of the page
const rulerH = document.getElementById('ruler-h');
const widthH = rulerH.clientWidth;
let path = 'M2 14.5H' + (widthH - 3);
for (let i = -38; i < 80; i++) {
    const x = Math.round(329 + i * STEP) + 0.5;
    if (x < 2 || x > widthH - 3) continue;
    path += `M${x} 14V${14 - tickLength(i, 11)}`;
    if (i % 10 === 0) {
        add(rulerH, 'text', { x: x + 2, y: 11 }, i * 5);
    }
}
add(rulerH, 'text', { x: 0, y: 11 }, '00');
add(rulerH, 'path', { d: path, stroke: '#000', fill: 'none' });
add(rulerH, 'path', { d: 'M258 9h8l-4 5z' });

// Vertical ruler, numbers run downwards one digit per line
const rulerV = document.getElementById('ruler-v');
path = 'M15.5 2V555';
for (let i = -7; i < 60; i++) {
    const y = Math.round(494 - i * STEP) + 0.5;
    if (y < 1) continue;
    path += `M15 ${y}H${15 - tickLength(i, 11)}`;
    if (i % 10 === 0) {
        String(i * 5).split('').forEach((digit, n) => {
            add(rulerV, 'text', { x: 4, y: y + 8 + n * 8 }, digit);
        });
    }
}
add(rulerV, 'text', { x: 4, y: 3 }, '0');
add(rulerV, 'text', { x: 4, y: 11 }, '0');
add(rulerV, 'path', { d: path, stroke: '#000', fill: 'none' });
add(rulerV, 'path', { d: 'M11 541v8l5-4z' });
```
